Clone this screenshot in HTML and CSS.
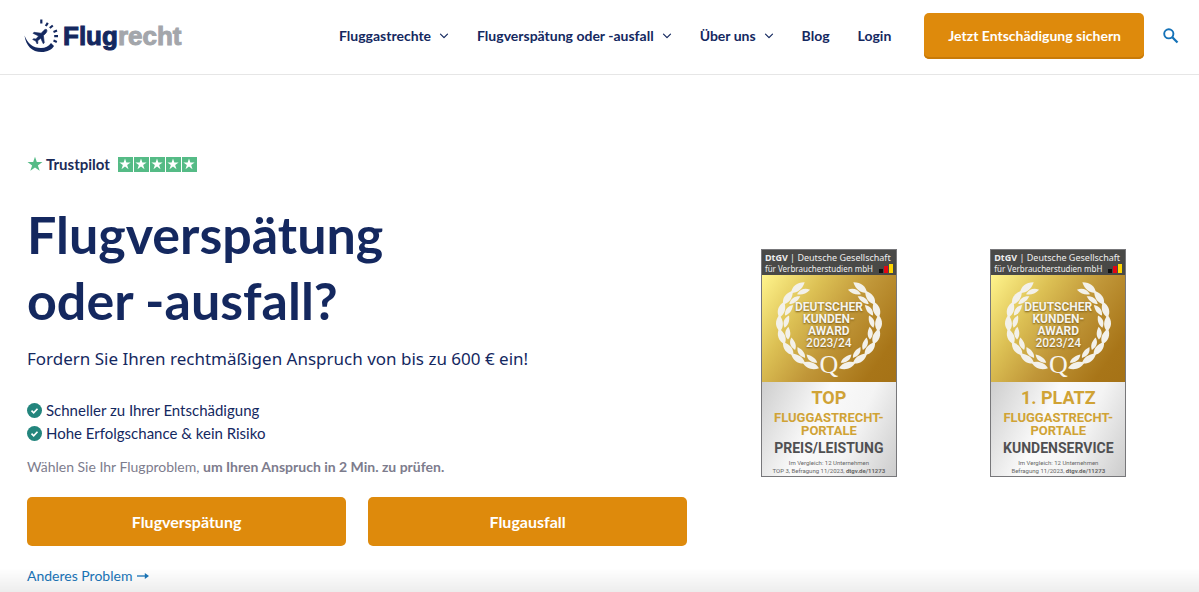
FILE: index.html
```
<!DOCTYPE html>
<html lang="de">
<head>
<meta charset="utf-8">
<meta name="viewport" content="width=device-width, initial-scale=1">
<title>Flugrecht</title>
<link rel="stylesheet" href="styles.css">
</head>
<body>
<svg class="defs" width="0" height="0" aria-hidden="true">
  <defs>
    <symbol id="chevron" viewBox="0 0 10 10"><path d="M1.500 3.200 5 6.700l3.500-3.500" fill="none" stroke="currentColor" stroke-width="1.200" stroke-linecap="round" stroke-linejoin="round"/></symbol>
    <symbol id="star" viewBox="0 0 24 24"><path d="M12 1l2.700 8.100h8.500l-6.900 5 2.700 8.200-7-5.100-7 5.100 2.700-8.200-6.900-5h8.500z" fill="currentColor"/></symbol>
    <symbol id="check" viewBox="0 0 16 16"><circle cx="8" cy="8" r="8" fill="#23857d"/><path d="M4.800 8.200l2.300 2.200 4.100-4.300" fill="none" stroke="#fff" stroke-width="1.800"/></symbol>
    <g id="pair">
      <path d="M2 48C-2 43.500 -8 42.500-15 46C-10 51.500-3 52 2 48z"/>
      <path d="M-1 43C-3 39-7 37-13 37C-11 42-7 44.500-1 43z"/>
    </g>
    <g id="branch">
      <use href="#pair" transform="rotate(14)"/>
      <use href="#pair" transform="rotate(31)"/>
      <use href="#pair" transform="rotate(48)"/>
      <use href="#pair" transform="rotate(65)"/>
      <use href="#pair" transform="rotate(82)"/>
      <use href="#pair" transform="rotate(99)"/>
      <use href="#pair" transform="rotate(116)"/>
      <use href="#pair" transform="rotate(133)"/>
    </g>
    <symbol id="laurel" viewBox="0 0 134 106">
      <g fill="#f3f1ea" transform="translate(67 48) scale(1.040 .960)">
        <use href="#branch"/>
        <use href="#branch" transform="scale(-1 1)"/>
      </g>
    </symbol>
  </defs>
</svg>

<header class="header">
  <a class="logo" href="#">
    <svg class="logo-mark" viewBox="0 0 34 34" aria-hidden="true">
      <path d="M.5 16.500C2 27 8 33 17.500 33c6 0 10.500-2.500 12.500-6l-3-3c-2.500 3.500-5.500 5-10 5C9 29 3.500 24.500 .5 16.500z" fill="#14285f"/>
      <path d="M22.500 10.500c-1-.6-2.200.4-3.500 1.800l-1.800 1.900-7.200-.9-1 1 5.600 2.700-2.700 3-2.400-.3-.8.8 3 1.500 1.400 3 .8-.8-.2-2.400 3-2.600 2.600 5.600 1-1-.9-7.200 2-1.900c1.300-1.300 2.100-3.200 1.100-4.200z" fill="#14285f" stroke="#14285f" stroke-width=".6"/>
      <path d="M17.300.5v4M23.800 3.800l-2 3.200M28.800 6.500l-3 2.500M33 11.500l-3.500 1.400M34 17.200h-3.800M32.800 23l-3.300-1.400" fill="none" stroke="#14285f" stroke-width="2.200"/>
    </svg>
    <span class="logo-text"><span class="logo-navy">Flug</span>recht</span>
  </a>
  <nav class="nav">
    <a href="#">Fluggastrechte <svg class="chevron" aria-hidden="true"><use href="#chevron"/></svg></a>
    <a href="#">Flugverspätung oder -ausfall <svg class="chevron" aria-hidden="true"><use href="#chevron"/></svg></a>
    <a href="#">Über uns <svg class="chevron" aria-hidden="true"><use href="#chevron"/></svg></a>
    <a href="#">Blog</a>
    <a href="#">Login</a>
  </nav>
  <a class="cta" href="#">Jetzt Entschädigung sichern</a>
  <button class="search" type="button" aria-label="Suche">
    <svg viewBox="0 0 16 16" aria-hidden="true"><circle cx="5.800" cy="5.800" r="4.600" fill="none" stroke="currentColor" stroke-width="1.900"/><path d="M9.300 9.300l5.200 5.200" stroke="currentColor" stroke-width="2.300"/></svg>
  </button>
</header>

<main class="hero">
  <section class="intro">
    <div class="trust">
      <svg class="trust-logo" aria-hidden="true"><use href="#star"/></svg>
      <span class="trust-name">Trustpilot</span>
      <span class="rating" role="img" aria-label="5 Sterne">
        <span class="tile"><svg><use href="#star"/></svg></span>
        <span class="tile"><svg><use href="#star"/></svg></span>
        <span class="tile"><svg><use href="#star"/></svg></span>
        <span class="tile"><svg><use href="#star"/></svg></span>
        <span class="tile"><svg><use href="#star"/></svg></span>
      </span>
    </div>
    <h1 class="title">Flugverspätung<br>oder -ausfall?</h1>
    <p class="lead">Fordern Sie Ihren rechtmäßigen Anspruch von bis zu 600 € ein!</p>
    <ul class="benefits">
      <li><svg aria-hidden="true"><use href="#check"/></svg>Schneller zu Ihrer Entschädigung</li>
      <li><svg aria-hidden="true"><use href="#check"/></svg>Hohe Erfolgschance &amp; kein Risiko</li>
    </ul>
    <p class="hint">Wählen Sie Ihr Flugproblem, <strong>um Ihren Anspruch in 2 Min. zu prüfen.</strong></p>
    <div class="choices">
      <a class="choice" href="#">Flugverspätung</a>
      <a class="choice" href="#">Flugausfall</a>
    </div>
    <a class="other" href="#">Anderes Problem <svg viewBox="0 0 12 8" aria-hidden="true"><path d="M0 4h9" stroke="currentColor" stroke-width="1.300"/><path d="M7.800 1L12 4 7.800 7z" fill="currentColor"/></svg></a>
  </section>

  <aside class="awards">
    <article class="award">
      <div class="award-head">
        <div><b>DtGV</b> | Deutsche Gesellschaft</div>
        <div class="award-org">für Verbraucherstudien mbH <span class="bars"><i></i><i></i><i></i></span></div>
      </div>
      <div class="award-gold">
        <svg class="laurel" aria-hidden="true"><use href="#laurel"/></svg>
        <div class="award-name">DEUTSCHER<br>KUNDEN-<br>AWARD<br><span class="year">2023/24</span></div>
        <div class="award-q">Q</div>
      </div>
      <div class="award-body">
        <div class="rank">TOP</div>
        <div class="sector">FLUGGASTRECHT-<br>PORTALE</div>
        <div class="category">PREIS/LEISTUNG</div>
        <div class="source">Im Vergleich: 12 Unternehmen<br>TOP 3, Befragung 11/2023, <b>dtgv.de/11273</b></div>
      </div>
    </article>
    <article class="award">
      <div class="award-head">
        <div><b>DtGV</b> | Deutsche Gesellschaft</div>
        <div class="award-org">für Verbraucherstudien mbH <span class="bars"><i></i><i></i><i></i></span></div>
      </div>
      <div class="award-gold">
        <svg class="laurel" aria-hidden="true"><use href="#laurel"/></svg>
        <div class="award-name">DEUTSCHER<br>KUNDEN-<br>AWARD<br><span class="year">2023/24</span></div>
        <div class="award-q">Q</div>
      </div>
      <div class="award-body">
        <div class="rank">1. PLATZ</div>
        <div class="sector">FLUGGASTRECHT-<br>PORTALE</div>
        <div class="category">KUNDENSERVICE</div>
        <div class="source">Im Vergleich: 12 Unternehmen<br>Befragung 11/2023, <b>dtgv.de/11273</b></div>
      </div>
    </article>
  </aside>
</main>
<div class="fade"></div>
</body>
</html>
```
FILE: styles.css
```
* { box-sizing: border-box; }
body {
  margin: 0;
  background: #fff;
  color: #14285f;
  font-family: Lato, "Open Sans", sans-serif;
  font-size: 14px;
  overflow-x: hidden;
}
a { color: inherit; text-decoration: none; }
p, h1, ul { margin: 0; padding: 0; }
.defs { position: absolute; }

.header {
  display: flex;
  align-items: center;
  padding: 13px 20px 15px 24px;
  border-bottom: 1px solid #e6e6e6;
}
.logo { display: flex; align-items: center; gap: 5px; }
.logo-mark { width: 34px; height: 34px; }
.logo-text { font: 700 26px/28px "Liberation Sans", Arial, sans-serif; color: #a3a6ab; -webkit-text-stroke: 1px #a3a6ab; }
.logo-navy { color: #14285f; -webkit-text-stroke: 1px #14285f; }
.nav { display: flex; gap: 28px; margin-left: auto; font-weight: 700; }
.nav a { display: flex; align-items: center; gap: 8px; line-height: 20px; white-space: nowrap; }
.chevron { width: 10px; height: 10px; }
.cta {
  margin-left: 33px;
  padding: 13px 23px 13px 24px;
  border-radius: 5px;
  background: #de8a0c;
  box-shadow: inset 0 -2px 0 #c87a08;
  color: #fff;
  font-weight: 700;
  line-height: 20px;
  white-space: nowrap;
}
.search { margin-left: 19px; padding: 0; border: 0; background: none; color: #1472b8; line-height: 0; }
.search svg { width: 16px; height: 16px; }

.hero {
  display: grid;
  grid-template-columns: 59fr 41fr;
  gap: 27px;
  padding: 79px 26px 0 27px;
}
.trust { display: flex; align-items: center; height: 20px; color: #1c2b58; }
.trust-logo { width: 16px; height: 16px; color: #55bb86; }
.trust-name { margin-left: 3px; font-size: 15px; font-weight: 700; }
.rating { display: flex; gap: 1px; margin-left: 8px; }
.tile { display: flex; align-items: center; justify-content: center; width: 15px; height: 15px; background: #55bb86; color: #fff; }
.tile svg { width: 12px; height: 12px; }
.title { margin-top: 27px; font-size: 52px; font-weight: 700; line-height: 66px; }
.lead { margin-top: 13px; font: 400 17px/26px "Noto Sans", sans-serif; }
.benefits { margin-top: 27px; list-style: none; }
.benefits li { display: flex; align-items: center; gap: 4px; font-size: 15px; line-height: 23px; }
.benefits svg { width: 15px; height: 15px; }
.hint { margin-top: 12px; color: #7d7c8d; line-height: 20px; }
.choices { display: grid; grid-template-columns: 1fr 1fr; gap: 22px; margin-top: 20px; }
.choice { padding: 13px; border-radius: 5px; background: #de8a0c; color: #fff; font-size: 16px; font-weight: 700; line-height: 23px; text-align: center; }
.other { display: inline-flex; align-items: center; gap: 5px; margin-top: 20px; color: #1a75b8; line-height: 20px; }
.other svg { width: 12px; height: 8px; }

.awards { display: grid; grid-template-columns: 1fr 1fr; justify-items: center; align-items: start; padding-top: 95px; }
.award { width: 136px; border: 1px solid #77777a; font-family: Roboto, sans-serif; text-align: center; white-space: nowrap; }
.award-head { height: 25px; padding: 2px 0 0 3px; background: #494947; color: #eee; font: 9px/11px "Noto Sans", sans-serif; text-align: left; }
.award-org { display: flex; gap: 6px; font-size: 8px; }
.bars { display: flex; align-items: flex-end; gap: 1px; height: 10px; }
.bars i { width: 4px; height: 4px; background: #111; }
.bars i:nth-child(2) { height: 7px; background: #e30613; }
.bars i:nth-child(3) { height: 9px; background: #ffd500; }
.award-gold { position: relative; height: 107px; padding-top: 26px; background: linear-gradient(125deg, #fff48c 0%, #dcc054 30%, #c09638 55%, #a87518 85%, #a57216 100%); color: #f6f4ee; }
.laurel { position: absolute; left: 0; top: 0; width: 100%; height: 106px; }
.award-name { position: relative; font-size: 12px; font-weight: 700; line-height: 12px; text-shadow: 0 1px 2px #7a5a14; }
.year { font-weight: 500; }
.award-q { position: relative; font: 26px/32px "Liberation Serif", serif; }
.award-body { height: 94px; padding-top: 6px; background: linear-gradient(115deg, #cecece 0%, #fafafa 40%, #f4f4f4 65%, #cccccc 100%); }
.rank { color: #d0a336; font-size: 18px; font-weight: 700; line-height: 20px; }
.sector { padding-top: 3px; color: #d0a336; font-size: 13px; font-weight: 700; line-height: 13px; }
.category { color: #505052; font-size: 14px; font-weight: 700; line-height: 22px; }
.source { color: #666; font-size: 6px; line-height: 8px; }

.fade { position: fixed; right: 0; bottom: 0; left: 0; height: 24px; background: linear-gradient(rgba(0,0,0,0), rgba(0,0,0,.07)); pointer-events: none; }
```
